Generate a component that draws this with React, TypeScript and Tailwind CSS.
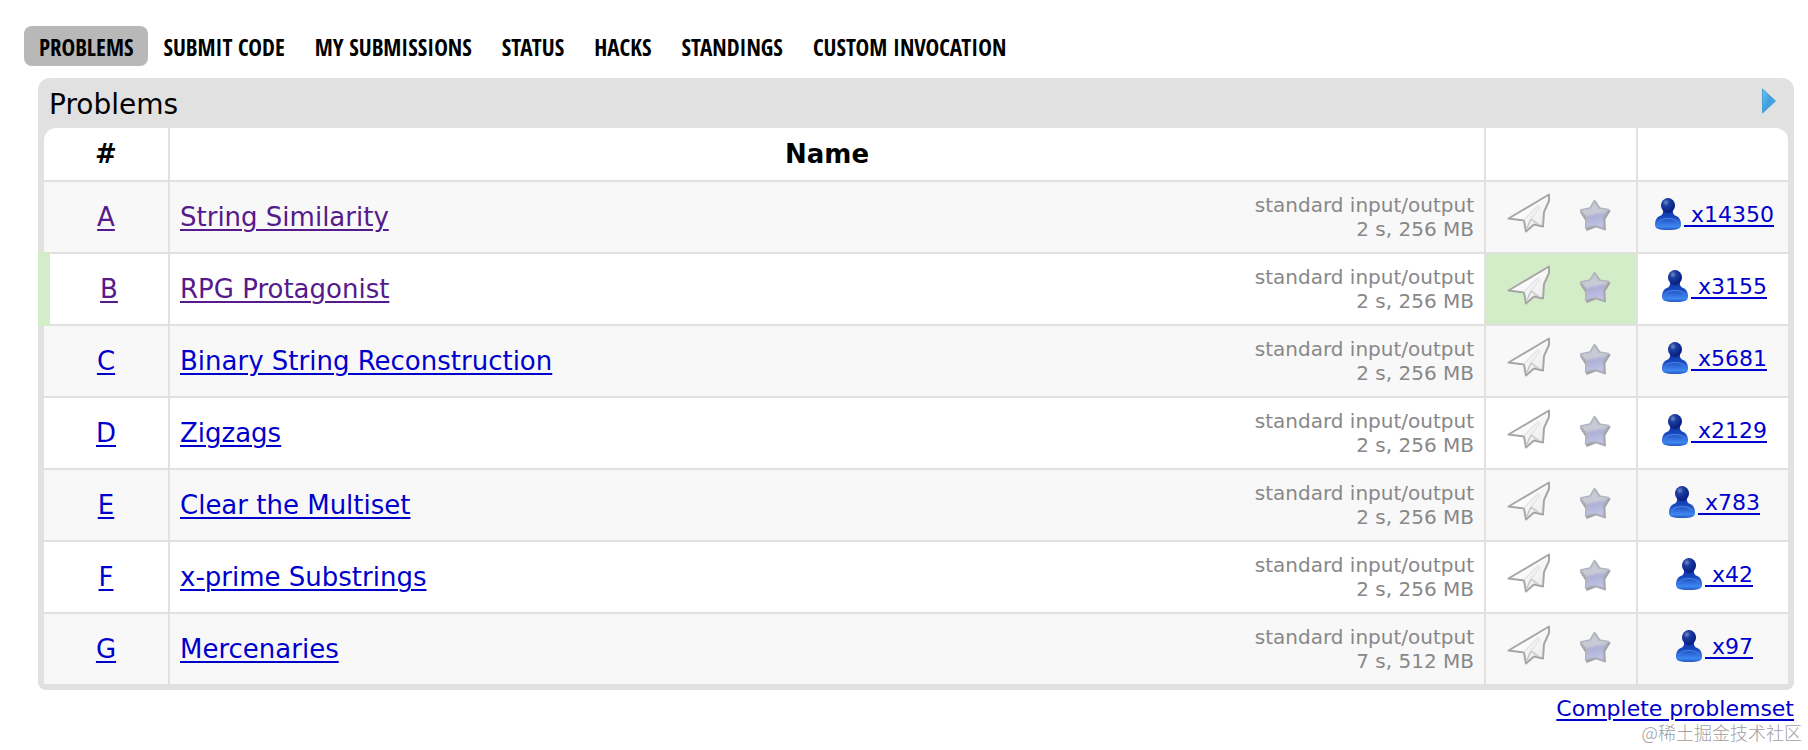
import { useState } from "react";

type Problem = {
  index: string;
  name: string;
  limits: string;
  solved: number;
  visited?: boolean;
  accepted?: boolean;
};

const tabs = [
  "Problems",
  "Submit code",
  "My submissions",
  "Status",
  "Hacks",
  "Standings",
  "Custom invocation",
];

const problems: Problem[] = [
  { index: "A", name: "String Similarity", limits: "2 s, 256 MB", solved: 14350, visited: true },
  { index: "B", name: "RPG Protagonist", limits: "2 s, 256 MB", solved: 3155, visited: true, accepted: true },
  { index: "C", name: "Binary String Reconstruction", limits: "2 s, 256 MB", solved: 5681 },
  { index: "D", name: "Zigzags", limits: "2 s, 256 MB", solved: 2129 },
  { index: "E", name: "Clear the Multiset", limits: "2 s, 256 MB", solved: 783 },
  { index: "F", name: "x-prime Substrings", limits: "2 s, 256 MB", solved: 42 },
  { index: "G", name: "Mercenaries", limits: "7 s, 512 MB", solved: 97 },
];

const linkClass = "underline decoration-2 underline-offset-3";

function IconGradients() {
  return (
    <svg className="absolute size-0" aria-hidden="true">
      <defs>
        <linearGradient id="star" x1="0.3" y1="0" x2="0.5" y2="1">
          <stop offset="0" stopColor="#c3c7cc" />
          <stop offset="0.45" stopColor="#c9ccd6" />
          <stop offset="0.6" stopColor="#aeb0d6" />
          <stop offset="1" stopColor="#c2c4ea" />
        </linearGradient>
        <linearGradient id="plane" x1="0" y1="0" x2="1" y2="1">
          <stop offset="0.3" stopColor="#ffffff" />
          <stop offset="1" stopColor="#e6e6e6" />
        </linearGradient>
        <radialGradient id="head" cx="0.35" cy="0.3" r="0.7">
          <stop offset="0" stopColor="#6f8ccc" />
          <stop offset="0.35" stopColor="#1c3da0" />
          <stop offset="1" stopColor="#081c80" />
        </radialGradient>
        <linearGradient id="body" x1="0" y1="0" x2="0" y2="1">
          <stop offset="0" stopColor="#0a2490" />
          <stop offset="0.45" stopColor="#1747bd" />
          <stop offset="0.85" stopColor="#3f87f0" />
          <stop offset="1" stopColor="#2358c4" />
        </linearGradient>
        <linearGradient id="arrow" x1="0" y1="0" x2="1" y2="1">
          <stop offset="0" stopColor="#6fc6f2" />
          <stop offset="0.5" stopColor="#3f9fe0" />
          <stop offset="1" stopColor="#3fb4ee" />
        </linearGradient>
      </defs>
    </svg>
  );
}

function PlaneIcon() {
  return (
    <svg className="h-10 w-11" viewBox="0 0 44 40" fill="none" strokeLinejoin="round">
      <path d="M42 1.5 L1.5 25.5 L17 27.5 L19 38.5 L27 31.5 L36 33.5 L37 19 L42 8 Z" fill="url(#plane)" stroke="#a6a6a6" strokeWidth="2" />
      <path d="M20 35 L24 26 L31 31" stroke="#c4c4c4" strokeWidth="1.5" />
      <path d="M24 26 L33 14 M17 27 L32 12" stroke="#e4e4e4" strokeWidth="1.5" />
    </svg>
  );
}

function StarIcon() {
  return (
    <svg className="h-[34px] w-8" viewBox="0 0 32 34" strokeLinejoin="round">
      <path d="M16.5 3 L21 10 L30.5 12 L25.5 20 L26 30.5 L17 27.5 L8 31 L7 21 L2 13 L12 10 Z" fill="#96969e" stroke="#a2a2a8" strokeWidth="1.8" />
      <path d="M15.5 1.5 L20 9 L29.5 10.5 L24 18.5 L25 29 L15.5 26.5 L6.5 29 L7.5 18.5 L1.5 11 L11 9 Z" fill="url(#star)" stroke="#b2b4c0" strokeWidth="1.5" />
    </svg>
  );
}

function UserIcon() {
  return (
    <svg className="size-8 shrink-0" viewBox="0 0 32 32">
      <path d="M10.5 8 H21.5 C20.5 13 20.5 16 23 17.5 C27 18.5 29 22 29 26.5 C29 30.5 26.5 32 16 32 C5.5 32 3 30.5 3 26.5 C3 22 5 18.5 9 17.5 C11.5 16 11.5 13 10.5 8 Z" fill="url(#body)" />
      <path d="M6 25 C8 21 12 20.5 16 20.5 C20 20.5 24 21 26 25" fill="none" stroke="#4f80dc" strokeWidth="1.2" />
      <ellipse cx="16" cy="7.5" rx="7" ry="7.5" fill="url(#head)" />
    </svg>
  );
}

function App() {
  const [active, setActive] = useState("Problems");

  return (
    <div className="bg-white pb-2.5 font-['Verdana','DejaVu_Sans',sans-serif] text-black">
      <IconGradients />
      <nav className="flex pt-[26px] pl-6">
        {tabs.map((tab) => (
          <a
            key={tab}
            href="#"
            onClick={() => setActive(tab)}
            className={`rounded-lg px-[15px] pt-0.5 font-['Noto_Sans_ExtraCondensed','Open_Sans_Condensed','Roboto_Condensed','Liberation_Sans_Narrow',sans-serif] text-[23px] leading-[38px] font-bold whitespace-nowrap uppercase ${
              active === tab ? "bg-[#b8b8b8]" : ""
            }`}
          >
            {tab}
          </a>
        ))}
      </nav>

      <main className="mt-3 mr-3.5 ml-[38px]">
        <section className="rounded-t-xl rounded-b-lg bg-[#e1e1e1] px-1.5 pb-1.5">
          <div className="flex h-[50px] items-center justify-between pr-3 pl-[5px]">
            <h1 className="pt-1 text-[28px]">Problems</h1>
            <button type="button" aria-label="Expand" className="pb-1">
              <svg className="h-[26px] w-3.5" viewBox="0 0 14 26">
                <path d="M0.5 1 L13.5 13 L0.5 25 Z" fill="url(#arrow)" stroke="#4a9fd0" />
              </svg>
            </button>
          </div>

          <table className="w-full table-fixed border-separate border-spacing-0 [&_td:last-child]:border-r-0 [&_td]:border-[#e1e1e1] [&_th]:border-[#e1e1e1]">
            <colgroup>
              <col className="w-[126px]" />
              <col />
              <col className="w-[152px]" />
              <col className="w-[150px]" />
            </colgroup>
            <thead>
              <tr className="h-[54px] text-[26px]">
                <th className="rounded-tl-xl border-r-2 border-b-2 bg-white">#</th>
                <th className="border-r-2 border-b-2 bg-white">Name</th>
                <th className="border-r-2 border-b-2 bg-white" />
                <th className="rounded-tr-xl border-b-2 bg-white" />
              </tr>
            </thead>
            <tbody className="[&>tr:last-child>td]:border-b-0">
              {problems.map((p) => (
                <tr key={p.index} className="h-18 odd:bg-[#f8f8f8] even:bg-white last:h-[70px]">
                  <td className={`relative border-r-2 border-b-2 text-center text-[26px] ${p.accepted ? "pl-1.5" : ""}`}>
                    {p.accepted && <span className="absolute -top-0.5 -bottom-0.5 -left-1.5 w-3 bg-[#d4edc9]" />}
                    <a href="#" className={`${linkClass} ${p.visited ? "text-[#551a8b]" : "text-[#0000cc]"}`}>
                      {p.index}
                    </a>
                  </td>
                  <td className="border-r-2 border-b-2 px-2.5">
                    <div className="flex items-center justify-between">
                      <a href="#" className={`${linkClass} text-[26px] ${p.visited ? "text-[#551a8b]" : "text-[#0000cc]"}`}>
                        {p.name}
                      </a>
                      <div className="text-right text-xl leading-6 text-[#888]">
                        <div>standard input/output</div>
                        <div>{p.limits}</div>
                      </div>
                    </div>
                  </td>
                  <td className={`border-r-2 border-b-2 ${p.accepted ? "bg-[#d4edc9]" : ""}`}>
                    <div className="flex items-end justify-center gap-7 pr-1 pb-2">
                      <button type="button" aria-label="Submit">
                        <PlaneIcon />
                      </button>
                      <button type="button" aria-label="Add to favourites">
                        <StarIcon />
                      </button>
                    </div>
                  </td>
                  <td className="border-b-2 pb-1.5">
                    <a href="#" className="flex items-center justify-center text-[22px] text-[#0000cc]">
                      <UserIcon />
                      <span className={`${linkClass} whitespace-pre`}> x{p.solved}</span>
                    </a>
                  </td>
                </tr>
              ))}
            </tbody>
          </table>
        </section>

        <div className="mt-1 text-right text-[22px] leading-[30px]">
          <a href="#" className={`${linkClass} text-[#0000cc]`}>
            Complete problemset
          </a>
        </div>
      </main>
      <p className="mr-1.5 text-right font-['Noto_Sans_CJK_SC',sans-serif] text-lg leading-4 font-light text-[#a0a0a0]">
        @稀土掘金技术社区
      </p>
    </div>
  );
}

export default App;
